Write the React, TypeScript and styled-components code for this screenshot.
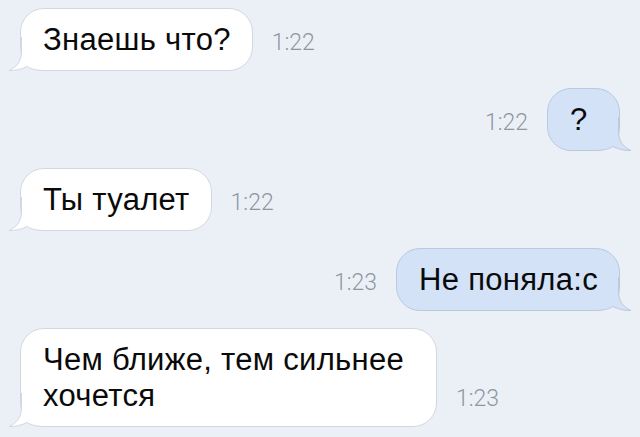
import React from 'react';
import styled, { createGlobalStyle } from 'styled-components';

const GlobalStyle = createGlobalStyle`
  html, body {
    margin: 0;
    padding: 0;
    background: #ebf0f7;
  }
  body {
    width: 640px;
    height: 437px;
    overflow: hidden;
  }
`;

const Thread = styled.div`
  display: flex;
  flex-direction: column;
  gap: 17px;
  padding: 8px 20px 0;
  box-sizing: border-box;
  width: 640px;
  height: 437px;
  background: #ebf0f7;
`;

const Row = styled.div<{ $out?: boolean }>`
  display: flex;
  flex-direction: ${({ $out }) => ($out ? 'row-reverse' : 'row')};
  align-items: last baseline;
  gap: 19px;
`;

const Bubble = styled.div<{ $out?: boolean }>`
  position: relative;
  box-sizing: border-box;
  max-width: 417px;
  min-width: 73px;
  padding: 13px 21px 12px 22px;
  border-radius: 24px;
  border: 1px solid ${({ $out }) => ($out ? '#b9c9de' : '#d2d8e0')};
  background: ${({ $out }) => ($out ? '#d3e2f7' : '#ffffff')};
  color: #0a0a0a;
  font-family: 'Liberation Sans', Arial, sans-serif;
  font-size: 31px;
  line-height: 36px;
  letter-spacing: 0.3px;
`;

const Time = styled.span`
  font-family: Roboto, 'Liberation Sans', sans-serif;
  font-weight: 300;
  font-size: 23px;
  color: #8f969f;
`;

const TailSvg = styled.svg<{ $out?: boolean }>`
  position: absolute;
  bottom: -1px;
  width: 40px;
  height: 34px;
  ${({ $out }) => ($out ? 'right: -14px; transform: scaleX(-1);' : 'left: -14px;')}
`;

const Tail = ({ out }: { out?: boolean }) => {
  const fill = out ? '#d3e2f7' : '#ffffff';
  const stroke = out ? '#b9c9de' : '#d2d8e0';
  return (
    <TailSvg $out={out} viewBox="0 0 40 34">
      <path
        d="M14.5 0 L14.5 14 C14.5 24 10 30 2 33.5 C9 33.8 15 32 20 29.5 C24 32 29 33.5 40 33.5 L40 0 Z"
        fill={fill}
      />
      <path
        d="M14.5 0 L14.5 14 C14.5 24 10 30 2 33.5 C9 33.8 15 32 20 29.5 C24 32 29 33.5 40 33.5"
        fill="none"
        stroke={stroke}
        strokeWidth="1"
      />
    </TailSvg>
  );
};

const Text = styled.span`
  position: relative;
`;

const messages = [
  { text: 'Знаешь что?', time: '1:22', out: false },
  { text: '?', time: '1:22', out: true },
  { text: 'Ты туалет', time: '1:22', out: false },
  { text: 'Не поняла:с', time: '1:23', out: true },
  { text: 'Чем ближе, тем сильнее хочется', time: '1:23', out: false },
];

export default function App() {
  return (
    <>
      <GlobalStyle />
      <Thread>
        {messages.map((m, i) => (
          <Row key={i} $out={m.out}>
            <Bubble $out={m.out}>
              <Tail out={m.out} />
              <Text>{m.text}</Text>
            </Bubble>
            <Time>{m.time}</Time>
          </Row>
        ))}
      </Thread>
    </>
  );
}
